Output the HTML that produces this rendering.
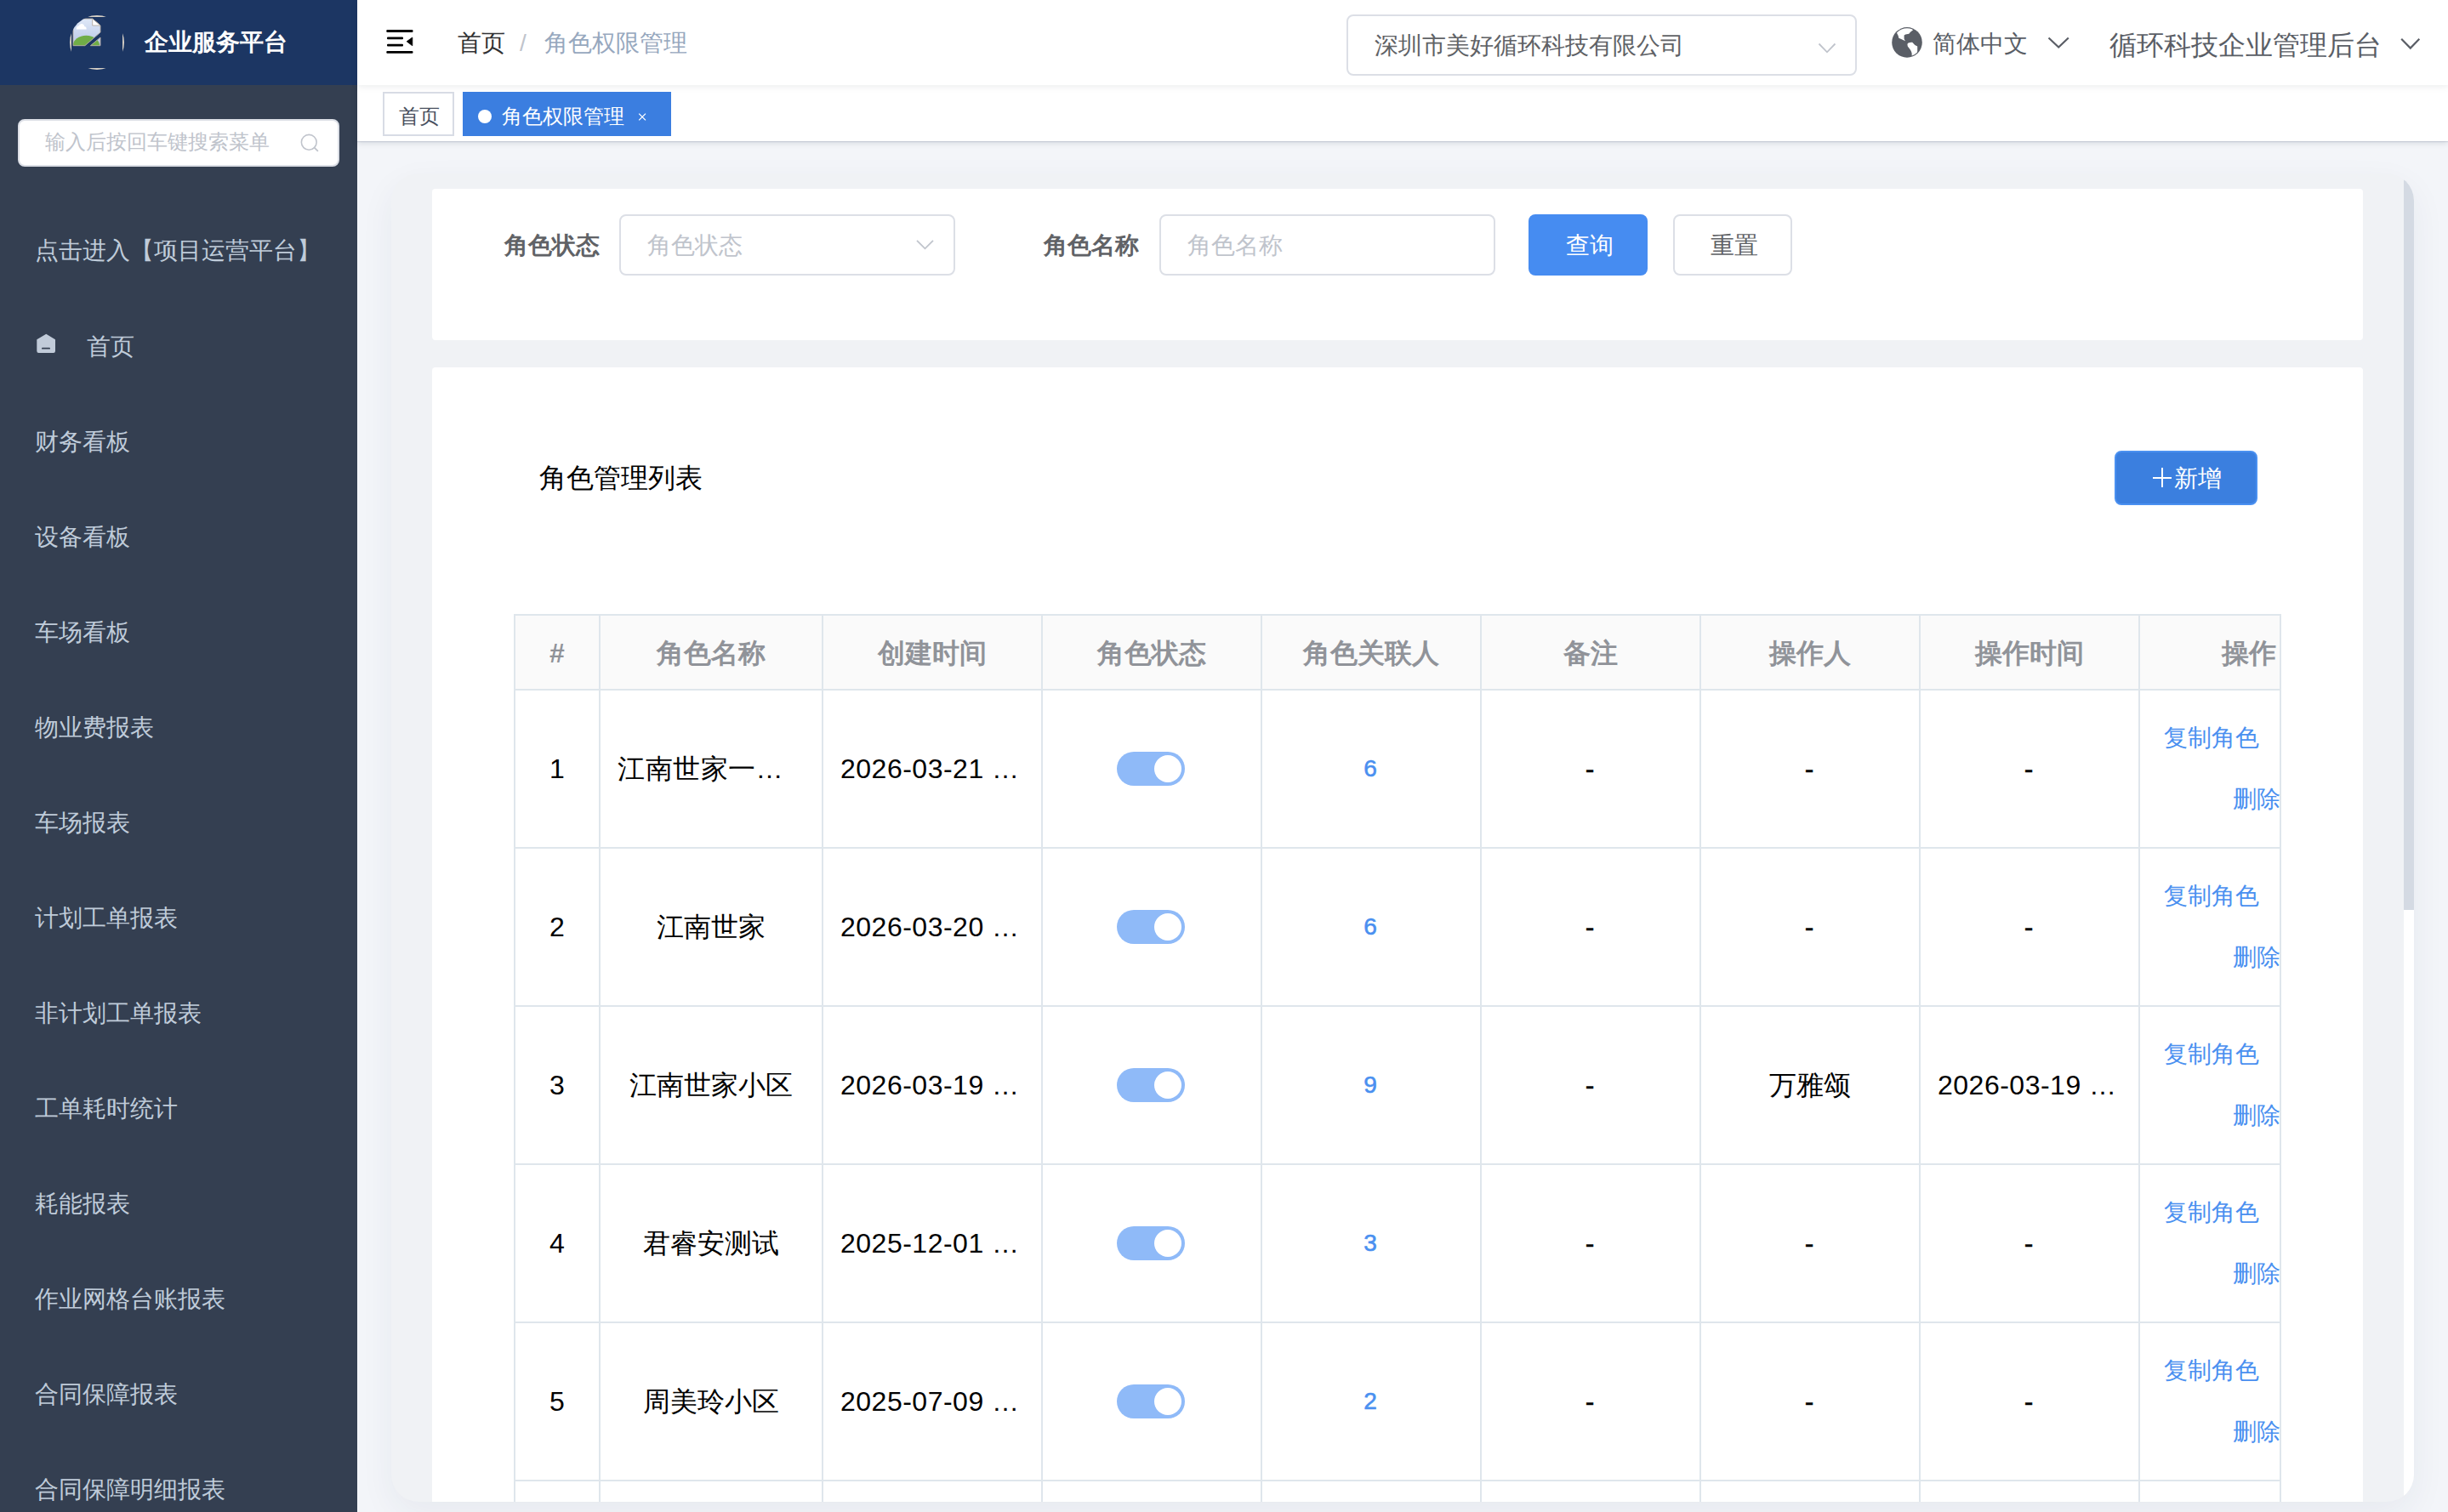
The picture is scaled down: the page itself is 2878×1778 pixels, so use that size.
<!DOCTYPE html>
<html><head><meta charset="utf-8">
<style>
*{box-sizing:border-box;margin:0;padding:0}
html,body{width:2878px;height:1778px;overflow:hidden}
body{position:relative;background:#f3f5f9;font-family:"Liberation Sans",sans-serif;color:#303133}
.a{position:absolute;white-space:nowrap}
#side{position:absolute;left:0;top:0;width:420px;height:1778px;background:#343f51;overflow:hidden}
#logo{position:absolute;left:0;top:0;width:420px;height:100px;background:#1c3663}
.mi{position:absolute;left:41px;font-size:28px;line-height:28px;color:#bfcbd9}
#hdr{position:absolute;left:420px;top:0;width:2458px;height:100px;background:#fff;box-shadow:0 2px 8px rgba(0,21,41,.08);z-index:2}
#tabs{position:absolute;left:420px;top:100px;width:2458px;height:66px;background:#fff;box-shadow:0 1px 1px rgba(40,60,100,.12),0 2px 7px rgba(0,21,41,.13);z-index:1}
#main{position:absolute;left:460px;top:204px;width:2378px;height:1562px;border-radius:32px;background:#f0f2f5;overflow:hidden;box-shadow:0 14px 40px rgba(30,50,90,.06)}
.card{position:absolute;left:48px;width:2270px;background:#fff;border-radius:4px}
.inp{position:absolute;border:2px solid #dcdfe6;border-radius:8px;background:#fff}
.cell{position:absolute;font-size:32px;line-height:32px;color:#000}
.hline{position:absolute;height:2px;background:#dfe6ec}
.vline{position:absolute;width:2px;background:#dfe6ec}
.sw{position:absolute;width:80px;height:40px;border-radius:20px;background:#8fbaf8}
.sw:after{content:"";position:absolute;left:44px;top:4px;width:32px;height:32px;border-radius:50%;background:#fff}
.lk{position:absolute;font-size:28px;line-height:28px;color:#4a90f0}
.hd{font-size:32px;line-height:32px;font-weight:bold;color:#909399;text-align:center}
.ct{text-align:center}
.hy{-webkit-text-stroke:0.4px #000}
.num{text-align:center;-webkit-text-stroke:0.6px #4a90f0;margin-left:-1px}
.dt{letter-spacing:0.5px}
</style></head>
<body>

<div id="side">
  <div id="logo">
    <svg class="a" style="left:82px;top:18px" width="64" height="64" viewBox="0 0 64 64">
 <defs>
  <clipPath id="cc"><circle cx="32" cy="32" r="32"/></clipPath>
  <linearGradient id="sky" x1="0" y1="0" x2="0" y2="1"><stop offset="0" stop-color="#dfe8f7"/><stop offset="1" stop-color="#b7c6e6"/></linearGradient>
  <clipPath id="docc"><path d="M0,0 H22.7 L32,8 V16.1 L13.8,31.7 H0 Z M32,22 V31.7 H20.4 Z"/></clipPath>
 </defs>
 <g clip-path="url(#cc)"><g transform="translate(4,4)">
  <path d="M0,0 H22.7 L32,8 V16.1 L13.8,31.7 H0 Z M32,22 V31.7 H20.4 Z" fill="url(#sky)"/>
  <g clip-path="url(#docc)"><ellipse cx="15.4" cy="31.9" rx="15.8" ry="12.2" fill="#70ad47"/></g>
  <path d="M0,0 H22.7 L32,8 V16.1 L13.8,31.7 H0 Z M32,22 V31.7 H20.4 Z" fill="none" stroke="#b3aaa0" stroke-width="0.9"/>
  <path d="M3.8,12 Q3.8,9 6.5,8.6 Q7.5,5.7 10.6,6.1 Q13.2,6.6 13.2,9 Q15.6,9.2 15.6,11.2 L15.6,12.6 H3.8 Z" fill="#fff"/>
  <path d="M22.7,0 V8 H32 Z" fill="#fff" stroke="#b3aaa0" stroke-width="0.9"/>
 </g></g>
 <g clip-path="url(#cc)"><path d="M-5,-5 H69 V69 H-5 Z M2,2 H62 V62 H2 Z" fill="#d5cfc5" fill-rule="evenodd"/></g>
</svg>
    <div class="a" style="left:170px;top:30px;font-size:28px;line-height:40px;font-weight:bold;color:#fff">企业服务平台</div>
  </div>
  <div class="a" style="left:21px;top:140px;width:378px;height:56px;background:#fff;border:2px solid #dcdfe6;border-radius:8px"></div>
  <div class="a" style="left:53px;top:152px;font-size:24px;line-height:30px;color:#c0c4cc">输入后按回车键搜索菜单</div>
  <svg class="a" style="left:350px;top:155px" width="28" height="28" viewBox="0 0 28 28"><circle cx="13.25" cy="12.3" r="8.9" fill="none" stroke="#c0c4cc" stroke-width="1.6"/><path d="M19.6,18.6 L23.4,22.4" stroke="#c0c4cc" stroke-width="1.8" stroke-linecap="round"/></svg>

  <div class="mi" style="top:281px">点击进入【项目运营平台】</div>
  <svg class="a" style="left:40px;top:390px" width="30" height="30" viewBox="40 390 30 30"><path d="M43.3,399.3 L54.25,392.7 L65,399.3 V412.8 Q65,415 62.8,415 H45.5 Q43.3,415 43.3,412.8 Z" fill="#c1cbd9"/><rect x="49" y="408.8" width="10" height="1.8" rx=".9" fill="#343f51"/></svg>
  <div class="mi" style="left:102px;top:394px">首页</div>
  <div class="mi" style="top:506px">财务看板</div>
  <div class="mi" style="top:618px">设备看板</div>
  <div class="mi" style="top:730px">车场看板</div>
  <div class="mi" style="top:842px">物业费报表</div>
  <div class="mi" style="top:954px">车场报表</div>
  <div class="mi" style="top:1066px">计划工单报表</div>
  <div class="mi" style="top:1178px">非计划工单报表</div>
  <div class="mi" style="top:1290px">工单耗时统计</div>
  <div class="mi" style="top:1402px">耗能报表</div>
  <div class="mi" style="top:1514px">作业网格台账报表</div>
  <div class="mi" style="top:1626px">合同保障报表</div>
  <div class="mi" style="top:1738px">合同保障明细报表</div>
</div>

<div id="hdr">
  <svg class="a" style="left:30px;top:30px" width="40" height="40" viewBox="450 30 40 40"><g fill="#000"><rect x="454.3" y="35" width="31.2" height="2.9" rx="1"/><rect x="455" y="43.4" width="19" height="2.8" rx="1"/><rect x="455" y="51.7" width="19" height="2.9" rx="1"/><rect x="454.3" y="59.9" width="31.2" height="2.8" rx="1"/><path d="M478.2,48.8 L484.8,44 V53.8 Z" stroke="#000" stroke-width="0.8" stroke-linejoin="round"/></g></svg>
  <div class="a" style="left:118px;top:37px;font-size:28px;line-height:28px;color:#303133">首页</div>
  <div class="a" style="left:191px;top:37px;font-size:28px;line-height:28px;color:#c0c4cc">/</div>
  <div class="a" style="left:220px;top:37px;font-size:28px;line-height:28px;color:#97a8be">角色权限管理</div>

  <div class="inp" style="left:1163px;top:17px;width:600px;height:72px"></div>
  <div class="a" style="left:1196px;top:40px;font-size:28px;line-height:28px;color:#606266">深圳市美好循环科技有限公司</div>
  <svg class="a" style="left:1710px;top:40px" width="40" height="30" viewBox="2130 40 40 30"><path d="M2138.5,51.5 L2148,61.3 L2157.5,51.5" fill="none" stroke="#c0c4cc" stroke-width="1.8"/></svg>

  <svg class="a" style="left:1804px;top:32px" width="36" height="36" viewBox="0 0 36 36"><defs><clipPath id="gc"><circle cx="18" cy="17.9" r="16.6"/></clipPath></defs><circle cx="18" cy="17.9" r="17.8" fill="#5a5e66"/><g clip-path="url(#gc)" fill="#fff"><path d="M5.9,6.4 L7.65,9.9 L8.3,12.7 L11.8,14.3 L15.9,16.2 L14.6,13.7 L14.6,9.6 L16.2,8.6 L20.3,7.65 L21.9,5.75 L25.1,3.2 L20,-2 L2,2 Z"/><path d="M18.4,20 Q18.9,18.8 19.6,18.5 Q22,17.6 24.2,17.8 L27.3,21 L30.2,22.6 L30.2,40 L23.8,40 L23.6,30.5 Q22.8,27.5 21.3,25.7 L18.8,22.6 Z"/></g></svg>
  <div class="a" style="left:1852px;top:38px;font-size:28px;line-height:28px;color:#5a5e66">简体中文</div>
  <svg class="a" style="left:1980px;top:35px" width="40" height="30" viewBox="2400 35 40 30"><path d="M2408.5,44.5 L2420.2,55.6 L2431.8,44.5" fill="none" stroke="#5a5e66" stroke-width="2.2"/></svg>
  <div class="a" style="left:2060px;top:37px;font-size:32px;line-height:32px;color:#5a5e66">循环科技企业管理后台</div>
  <svg class="a" style="left:2395px;top:35px" width="40" height="30" viewBox="2815 35 40 30"><path d="M2823.2,45.8 L2833.8,56.6 L2844.3,45.8" fill="none" stroke="#5a5e66" stroke-width="2.2"/></svg>
</div>

<div id="tabs">
  <div class="a" style="left:30px;top:8px;width:84px;height:52px;border:2px solid #d8dce5;background:#fff"></div>
  <div class="a" style="left:49px;top:25px;font-size:24px;line-height:24px;color:#495060">首页</div>
  <div class="a" style="left:124px;top:8px;width:245px;height:52px;background:#3b7ee0"></div>
  <div class="a" style="left:142px;top:29px;width:16px;height:16px;border-radius:50%;background:#fff"></div>
  <div class="a" style="left:170px;top:25px;font-size:24px;line-height:24px;color:#fff">角色权限管理</div>
  <svg class="a" style="left:326px;top:29px" width="16" height="16" viewBox="746 129 16 16"><path d="M751.2,133.6 L759,141.4 M759,133.6 L751.2,141.4" stroke="#fff" stroke-width="1.3"/></svg>
</div>

<div id="main">
  <div class="card" style="top:18px;height:178px">
    <div class="a" style="left:85px;top:53px;font-size:28px;line-height:28px;font-weight:bold;color:#606266">角色状态</div>
    <div class="inp" style="left:220px;top:30px;width:395px;height:72px"></div>
    <div class="a" style="left:253px;top:53px;font-size:28px;line-height:28px;color:#c0c4cc">角色状态</div>
    <svg class="a" style="left:560px;top:50px" width="40" height="30" viewBox="1068 272 40 30"><path d="M1078,282.8 L1087.5,292.3 L1097,282.8" fill="none" stroke="#c0c4cc" stroke-width="1.8"/></svg>
    <div class="a" style="left:719px;top:53px;font-size:28px;line-height:28px;font-weight:bold;color:#606266">角色名称</div>
    <div class="inp" style="left:855px;top:30px;width:395px;height:72px"></div>
    <div class="a" style="left:888px;top:53px;font-size:28px;line-height:28px;color:#c0c4cc">角色名称</div>
    <div class="a" style="left:1289px;top:30px;width:140px;height:72px;border-radius:8px;background:#468cf1"></div>
    <div class="a" style="left:1333px;top:53px;font-size:28px;line-height:28px;color:#fff">查询</div>
    <div class="inp" style="left:1459px;top:30px;width:140px;height:72px"></div>
    <div class="a" style="left:1503px;top:53px;font-size:28px;line-height:28px;color:#606266">重置</div>
  </div>

  <div class="card" style="top:228px;height:1400px">
    <div class="a" style="left:126px;top:114px;font-size:32px;line-height:32px;color:#000">角色管理列表</div>
    <div class="a" style="left:1978px;top:98px;width:168px;height:64px;border-radius:8px;background:#3b7fdf;border:2px solid #4a90f0"></div>
    <div class="a" style="left:2022.5px;top:129px;width:22.5px;height:2px;background:#fff"></div><div class="a" style="left:2033px;top:118px;width:2px;height:23px;background:#fff"></div><div class="a" style="left:2048px;top:117px;font-size:28px;line-height:28px;color:#fff">新增</div>
  </div>

  <div id="tbl"><div class="a" style="left:144px;top:518px;width:2078px;height:1044px;overflow:hidden">
<div class="a" style="left:0;top:0;width:2170px;height:88px;background:#fafafa"></div>
<div class="hline" style="left:0;top:0px;width:2170px"></div>
<div class="hline" style="left:0;top:88px;width:2170px"></div>
<div class="hline" style="left:0;top:274px;width:2170px"></div>
<div class="hline" style="left:0;top:460px;width:2170px"></div>
<div class="hline" style="left:0;top:646px;width:2170px"></div>
<div class="hline" style="left:0;top:832px;width:2170px"></div>
<div class="hline" style="left:0;top:1018px;width:2170px"></div>
<div class="vline" style="left:0px;top:0;height:1044px"></div>
<div class="vline" style="left:100px;top:0;height:1044px"></div>
<div class="vline" style="left:362px;top:0;height:1044px"></div>
<div class="vline" style="left:620px;top:0;height:1044px"></div>
<div class="vline" style="left:878px;top:0;height:1044px"></div>
<div class="vline" style="left:1136px;top:0;height:1044px"></div>
<div class="vline" style="left:1394px;top:0;height:1044px"></div>
<div class="vline" style="left:1652px;top:0;height:1044px"></div>
<div class="vline" style="left:1910px;top:0;height:1044px"></div>
<div class="vline" style="left:2168px;top:0;height:1044px"></div>
<div class="vline" style="left:2076px;top:0;height:1044px"></div>
<div class="a hd" style="left:2px;top:30px;width:98px">#</div>
<div class="a hd" style="left:102px;top:30px;width:260px">角色名称</div>
<div class="a hd" style="left:364px;top:30px;width:256px">创建时间</div>
<div class="a hd" style="left:622px;top:30px;width:256px">角色状态</div>
<div class="a hd" style="left:880px;top:30px;width:256px">角色关联人</div>
<div class="a hd" style="left:1138px;top:30px;width:256px">备注</div>
<div class="a hd" style="left:1396px;top:30px;width:256px">操作人</div>
<div class="a hd" style="left:1654px;top:30px;width:256px">操作时间</div>
<div class="a hd" style="left:1912px;top:30px;width:256px">操作</div>
<div class="a cell ct" style="left:2px;top:166px;width:98px">1</div>
<div class="a cell dt" style="left:122px;top:166px">江南世家一…</div>
<div class="a cell dt" style="left:384px;top:166px">2026-03-21 …</div>
<div class="sw" style="left:709px;top:162px"></div>
<div class="a lk num" style="left:880px;top:168px;width:256px">6</div>
<div class="a cell ct hy" style="left:1137px;top:166px;width:256px">-</div>
<div class="a cell ct hy" style="left:1395px;top:166px;width:256px">-</div>
<div class="a cell ct hy" style="left:1653px;top:166px;width:256px">-</div>
<div class="a lk" style="left:1940px;top:132px">复制角色</div>
<div class="a lk" style="left:2021px;top:204px">删除</div>
<div class="a cell ct" style="left:2px;top:352px;width:98px">2</div>
<div class="a cell ct" style="left:102px;top:352px;width:260px">江南世家</div>
<div class="a cell dt" style="left:384px;top:352px">2026-03-20 …</div>
<div class="sw" style="left:709px;top:348px"></div>
<div class="a lk num" style="left:880px;top:354px;width:256px">6</div>
<div class="a cell ct hy" style="left:1137px;top:352px;width:256px">-</div>
<div class="a cell ct hy" style="left:1395px;top:352px;width:256px">-</div>
<div class="a cell ct hy" style="left:1653px;top:352px;width:256px">-</div>
<div class="a lk" style="left:1940px;top:318px">复制角色</div>
<div class="a lk" style="left:2021px;top:390px">删除</div>
<div class="a cell ct" style="left:2px;top:538px;width:98px">3</div>
<div class="a cell ct" style="left:102px;top:538px;width:260px">江南世家小区</div>
<div class="a cell dt" style="left:384px;top:538px">2026-03-19 …</div>
<div class="sw" style="left:709px;top:534px"></div>
<div class="a lk num" style="left:880px;top:540px;width:256px">9</div>
<div class="a cell ct hy" style="left:1137px;top:538px;width:256px">-</div>
<div class="a cell ct" style="left:1396px;top:538px;width:256px">万雅颂</div>
<div class="a cell dt" style="left:1674px;top:538px">2026-03-19 …</div>
<div class="a lk" style="left:1940px;top:504px">复制角色</div>
<div class="a lk" style="left:2021px;top:576px">删除</div>
<div class="a cell ct" style="left:2px;top:724px;width:98px">4</div>
<div class="a cell ct" style="left:102px;top:724px;width:260px">君睿安测试</div>
<div class="a cell dt" style="left:384px;top:724px">2025-12-01 …</div>
<div class="sw" style="left:709px;top:720px"></div>
<div class="a lk num" style="left:880px;top:726px;width:256px">3</div>
<div class="a cell ct hy" style="left:1137px;top:724px;width:256px">-</div>
<div class="a cell ct hy" style="left:1395px;top:724px;width:256px">-</div>
<div class="a cell ct hy" style="left:1653px;top:724px;width:256px">-</div>
<div class="a lk" style="left:1940px;top:690px">复制角色</div>
<div class="a lk" style="left:2021px;top:762px">删除</div>
<div class="a cell ct" style="left:2px;top:910px;width:98px">5</div>
<div class="a cell ct" style="left:102px;top:910px;width:260px">周美玲小区</div>
<div class="a cell dt" style="left:384px;top:910px">2025-07-09 …</div>
<div class="sw" style="left:709px;top:906px"></div>
<div class="a lk num" style="left:880px;top:912px;width:256px">2</div>
<div class="a cell ct hy" style="left:1137px;top:910px;width:256px">-</div>
<div class="a cell ct hy" style="left:1395px;top:910px;width:256px">-</div>
<div class="a cell ct hy" style="left:1653px;top:910px;width:256px">-</div>
<div class="a lk" style="left:1940px;top:876px">复制角色</div>
<div class="a lk" style="left:2021px;top:948px">删除</div>
</div></div><!--/tbl-->

  <div class="a" style="left:2366px;top:0;width:12px;height:1562px;background:#fff"></div>
  <div class="a" style="left:2366px;top:0;width:12px;height:866px;background:#d4dae3"></div>
</div>

</body></html>
